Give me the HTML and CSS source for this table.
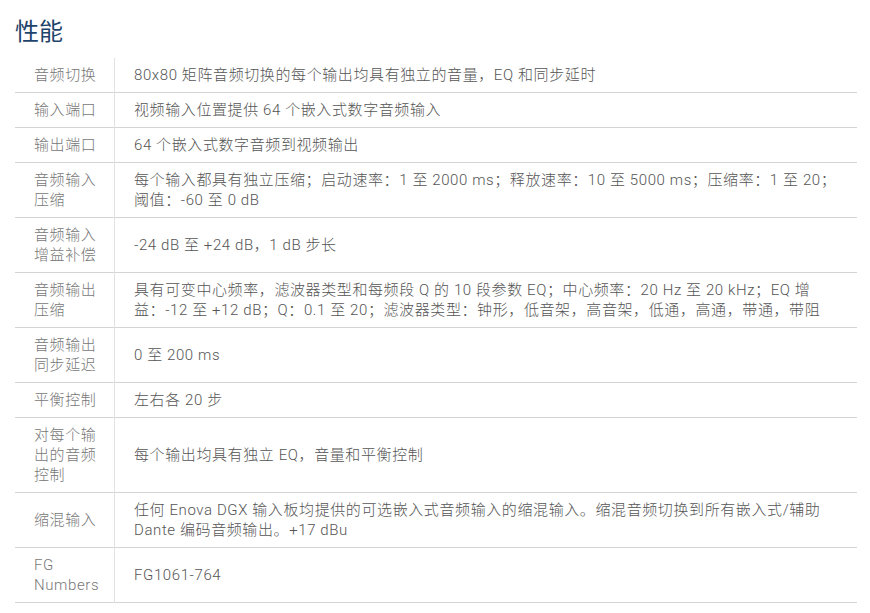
FILE: index.html
```html
<!DOCTYPE html>
<html lang="zh-CN">
<head>
  <meta charset="UTF-8">
  <title>性能</title>
  <link rel="stylesheet" href="styles.css">
</head>
<body>
  <div class="specs">
    <h2>性能</h2>
    <table class="spec-table">
      <tr>
        <th>音频切换</th>
        <td>80x80 矩阵音频切换的每个输出均具有独立的音量，EQ 和同步延时</td>
      </tr>
      <tr>
        <th>输入端口</th>
        <td>视频输入位置提供 64 个嵌入式数字音频输入</td>
      </tr>
      <tr>
        <th>输出端口</th>
        <td>64 个嵌入式数字音频到视频输出</td>
      </tr>
      <tr>
        <th>音频输入压缩</th>
        <td>每个输入都具有独立压缩；启动速率：1 至 2000 ms；释放速率：10 至 5000 ms；压缩率：1 至 20；阈值：-60 至 0 dB</td>
      </tr>
      <tr>
        <th>音频输入增益补偿</th>
        <td>-24 dB 至 +24 dB，1 dB 步长</td>
      </tr>
      <tr>
        <th>音频输出压缩</th>
        <td>具有可变中心频率，滤波器类型和每频段 Q 的 10 段参数 EQ；中心频率：20 Hz 至 20 kHz；EQ 增益：-12 至 +12 dB；Q：0.1 至 20；滤波器类型：钟形，低音架，高音架，低通，高通，带通，带阻</td>
      </tr>
      <tr>
        <th>音频输出同步延迟</th>
        <td>0 至 200 ms</td>
      </tr>
      <tr>
        <th>平衡控制</th>
        <td>左右各 20 步</td>
      </tr>
      <tr>
        <th>对每个输出的音频控制</th>
        <td>每个输出均具有独立 EQ，音量和平衡控制</td>
      </tr>
      <tr>
        <th>缩混输入</th>
        <td>任何 Enova DGX 输入板均提供的可选嵌入式音频输入的缩混输入。缩混音频切换到所有嵌入式/辅助 Dante 编码音频输出。+17 dBu</td>
      </tr>
      <tr>
        <th>FG Numbers</th>
        <td>FG1061-764</td>
      </tr>
    </table>
  </div>
</body>
</html>
```

FILE: styles.css
```css
body {
  margin: 0;
  background: #fff;
  font-family: Roboto, "Noto Sans CJK SC", sans-serif;
  font-weight: 300;
}
.specs {
  padding: 0 13px 0 15px;
}
h2 {
  margin: 0;
  padding: 17px 0 11px;
  font-size: 24px;
  line-height: 30px;
  font-weight: 400;
  color: #1f446b;
}
.spec-table {
  width: 100%;
  border-collapse: collapse;
  font-size: 15px;
  line-height: 20px;
  letter-spacing: 0.6px;
}
.spec-table tr {
  border-bottom: 1px solid #d4d4d4;
}
.spec-table th {
  width: 66px;
  padding: 7px 14px 7px 19px;
  text-align: left;
  font-weight: 300;
  color: #777;
  border-right: 1px solid #e2e2e2;
}
.spec-table td {
  padding: 7px 20px 7px 19px;
  color: #555;
}
```
